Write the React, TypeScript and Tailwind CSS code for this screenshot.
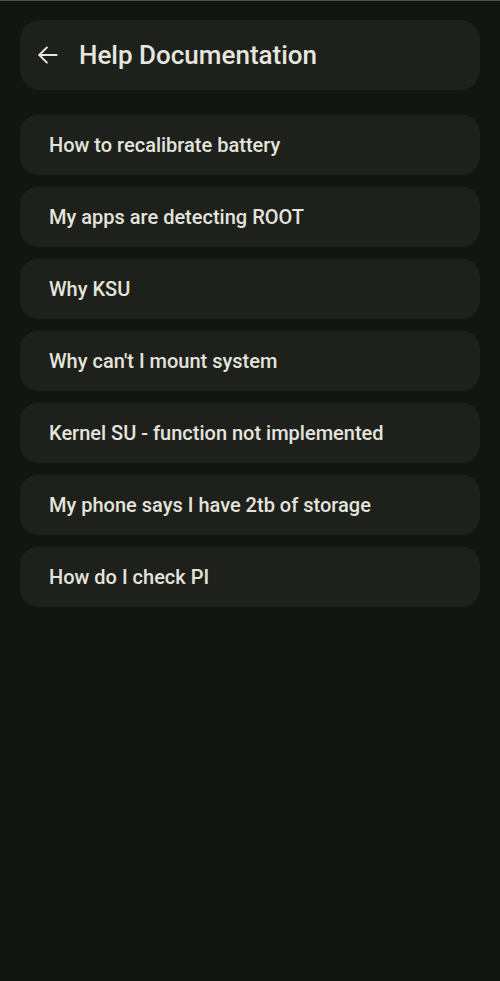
import React from 'react'

const topics = [
  'How to recalibrate battery',
  'My apps are detecting ROOT',
  'Why KSU',
  "Why can't I mount system",
  'Kernel SU - function not implemented',
  'My phone says I have 2tb of storage',
  'How do I check PI',
]

function App() {
  return (
    <div
      className="min-h-[981px] w-full bg-[#131610] border-t border-[#4b5a3c] px-5 pt-[19px]"
      style={{ fontFamily: 'Roboto, "Noto Sans", sans-serif' }}
    >
      <div className="flex h-[70px] items-center gap-[18px] rounded-[20px] bg-[#1e201b] pl-[15px]">
        <svg width="26" height="26" viewBox="0 0 24 24" fill="none" stroke="#e6e6df" strokeWidth="1.8" strokeLinecap="round" strokeLinejoin="round">
          <path d="M20 12H4" />
          <path d="M11 19l-7-7 7-7" />
        </svg>
        <h1 className="text-[26px] font-medium text-[#e6e6df]">Help Documentation</h1>
      </div>

      <div className="mt-[25px] flex flex-col gap-[12px]">
        {topics.map((t) => (
          <div key={t} className="flex h-[60px] items-center rounded-[18px] bg-[#1e201b] px-[29px]">
            <span className="text-[20px] font-medium text-[#e4e4dc]">{t}</span>
          </div>
        ))}
      </div>
    </div>
  )
}

export default App
